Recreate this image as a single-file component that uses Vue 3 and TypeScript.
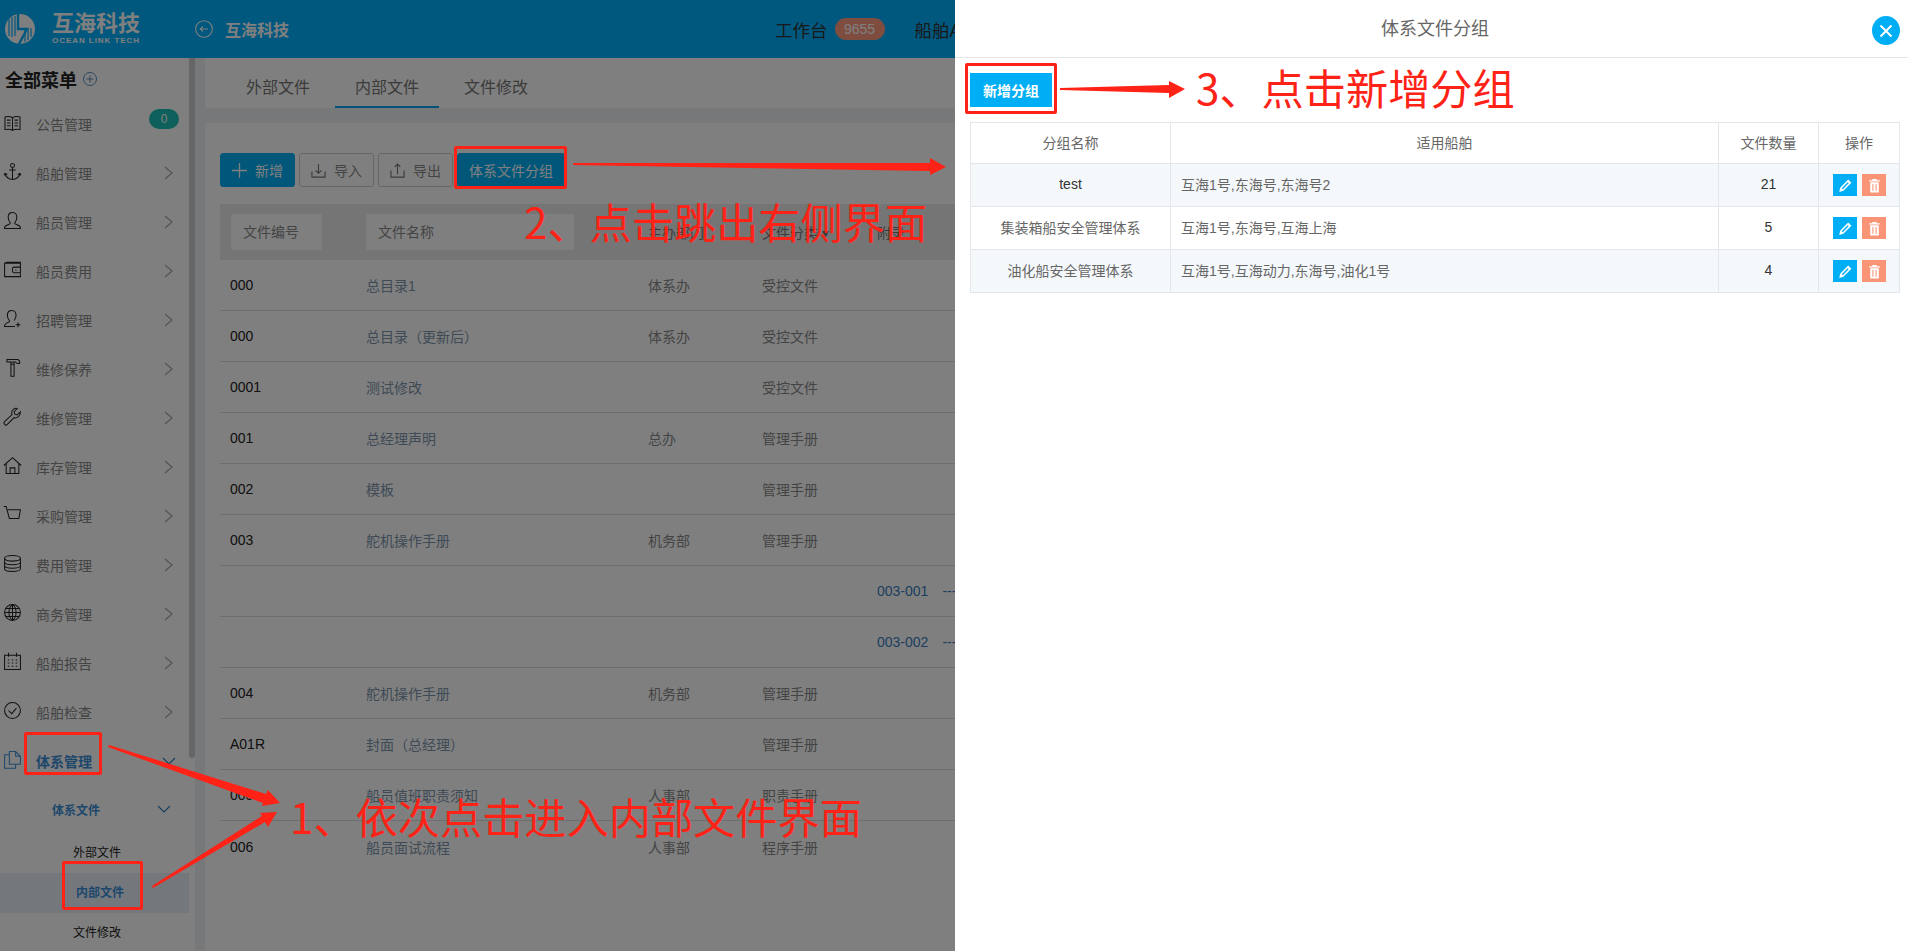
<script setup lang="ts">
interface MenuItem {
  label: string;
  icon: string;
  active?: boolean;
}

interface DocRow {
  code?: string;
  name?: string;
  dept?: string;
  kind?: string;
  link?: string;
}

const menu: MenuItem[] = [
  { label: '公告管理', icon: 'M12 6C9 4 6 4 2.500 5v16c3.500-1 6.500-1 9.500 1 3-2 6-2 9.500-1V5C18 4 15 4 12 6zM12 6v16M5 9h4.500M5 12.500h4.500M5 16h4.500M14.500 9H19M14.500 12.500H19M14.500 16H19' },
  { label: '船舶管理', icon: 'M12 7a2.500 2.500 0 1 0 0-5 2.500 2.500 0 0 0 0 5zM12 7v15M8 10h8M2.500 14c.5 5 5 8 9.500 8s9-3 9.500-8M2.500 14l-1 3M2.500 14l3 2M21.500 14l1 3M21.500 14l-3 2' },
  { label: '船员管理', icon: 'M12 2c-3.500 0-5.500 2.500-5.500 6 0 3 1.200 5 2.500 6.500v1.500c-2 1.500-7 2-7 5v1h20v-1c0-3-5-3.500-7-5v-1.500c1.300-1.500 2.500-3.500 2.500-6.500 0-3.500-2-6-5.500-6z' },
  { label: '船员费用', icon: 'M22 9V4H2v17h20v-4M2 4l3-1h17v1M14 9h8v7h-8c-1 0-2-1-2-2v-3c0-1 1-2 2-2zM15.500 12.500h1.500' },
  { label: '招聘管理', icon: 'M11 2c-3.500 0-5.500 2.500-5.500 6 0 3 1.200 5 2.500 6.500v1.500c-2 1.500-6 2-6 5v1h13M14 14.500c1.300-1.500 2.500-3.500 2.500-6.500 0-3.500-2-6-5.500-6M19 17v6M16 20h6' },
  { label: '维修保养', icon: 'M5 2h14l2 2v3h-3l-2-2H5zM10 5v3h4V5M10 8h4v15h-4z' },
  { label: '维修管理', icon: 'M22 6l-4 4-3-1-1-3 4-4c-3-1-7 1-7 5 0 1 0 2 .5 2.500L2 18.500c-1 1-1 2.500 0 3.500s2.500 1 3.500 0L14 13.500c3 1 8-1 8-7.500z' },
  { label: '库存管理', icon: 'M1 12L12 2l11 10M4 9v13h16V9M9 22v-7h6v7' },
  { label: '采购管理', icon: 'M1 2h3l4 15h12l2-11H6M9 21.500h.1M18 21.500h.1' },
  { label: '费用管理', icon: 'M2 5.500C2 3 7 2 12 2s10 1 10 3.500S17 9 12 9 2 8 2 5.500zM2 5.500v13C2 21 7 22 12 22s10-1 10-3.500v-13M2 10c0 2.500 5 3.500 10 3.500S22 12.500 22 10M2 14.500c0 2.500 5 3.500 10 3.500s10-1 10-3.500' },
  { label: '商务管理', icon: 'M12 2a10 10 0 1 0 0 20 10 10 0 0 0 0-20zM12 2c-3 2-4.500 6-4.500 10s1.500 8 4.500 10c3-2 4.500-6 4.500-10S15 4 12 2zM12 2v20M2 12h20M3.500 7h17M3.500 17h17' },
  { label: '船舶报告', icon: 'M2 4h20v18H2zM7 1v5M17 1v5M6 10h2M11 10h2M16 10h2M6 14h2M11 14h2M16 14h2M6 18h2M11 18h2M16 18h2' },
  { label: '船舶检查', icon: 'M12 2a10 10 0 1 0 0 20 10 10 0 0 0 0-20zM7 12l4 4 6-7' },
  { label: '体系管理', icon: 'M8 6H2v17h14v-5M8 2h8l6 6v10H8zM16 2v6h6', active: true },
];

const rows: DocRow[] = [
  { code: '000', name: '总目录1', dept: '体系办', kind: '受控文件' },
  { code: '000', name: '总目录（更新后）', dept: '体系办', kind: '受控文件' },
  { code: '0001', name: '测试修改', kind: '受控文件' },
  { code: '001', name: '总经理声明', dept: '总办', kind: '管理手册' },
  { code: '002', name: '模板', kind: '管理手册' },
  { code: '003', name: '舵机操作手册', dept: '机务部', kind: '管理手册' },
  { link: '003-001' },
  { link: '003-002' },
  { code: '004', name: '舵机操作手册', dept: '机务部', kind: '管理手册' },
  { code: 'A01R', name: '封面（总经理）', kind: '管理手册' },
  { code: '005', name: '船员值班职责须知', dept: '人事部', kind: '职责手册' },
  { code: '006', name: '船员面试流程', dept: '人事部', kind: '程序手册' },
];

const groups = [
  { name: 'test', ships: '互海1号,东海号,东海号2', count: 21 },
  { name: '集装箱船安全管理体系', ships: '互海1号,东海号,互海上海', count: 5 },
  { name: '油化船安全管理体系', ships: '互海1号,互海动力,东海号,油化1号', count: 4 },
];
</script>

<template>
  <div class="page">
    <header class="topbar">
      <div class="brand">
        <svg class="logo" viewBox="0 0 30 30">
          <circle cx="15" cy="15" r="15" fill="#fff" />
          <g stroke="#00b0ff" fill="none">
            <path d="M4 5v17M7 3v20M10 2v20" stroke-width="1.200" />
            <path d="M20 14v14M23 14v12M26 14v9" stroke-width="1.200" />
            <path d="M13 0v15h9L14 30" stroke-width="2.400" />
          </g>
        </svg>
        <div class="brand-text">
          <div class="brand-cn">互海科技</div>
          <div class="brand-en">OCEAN LINK TECH</div>
        </div>
      </div>
      <svg class="back" viewBox="0 0 18 18" fill="none" stroke="#fff" stroke-width="1.100">
        <circle cx="9" cy="9" r="8.300" />
        <path d="M13 9H5.500M8 6.300L5.300 9 8 11.700" />
      </svg>
      <span class="company">互海科技</span>
      <nav class="topnav">
        <span class="nav-item">工作台</span>
        <span class="nav-badge">9655</span>
        <span class="nav-item nav-next">船舶AIS</span>
      </nav>
    </header>

    <div class="main">
      <aside class="sidebar">
        <div class="menu-title">
          全部菜单
          <svg class="menu-plus" viewBox="0 0 14 14" fill="none" stroke="#5a8fc0" stroke-width="1">
            <circle cx="7" cy="7" r="6.500" />
            <path d="M7 3.500v7M3.500 7h7" />
          </svg>
        </div>
        <div v-for="(item, i) in menu" :key="item.label" class="menu-item" :class="{ active: item.active }">
          <svg class="menu-icon" viewBox="0 0 24 24" fill="none" stroke="currentColor" stroke-width="1.300">
            <path :d="item.icon" />
          </svg>
          <span class="menu-label">{{ item.label }}</span>
          <span v-if="i === 0" class="notice-badge">0</span>
          <svg v-else-if="item.active" class="chev" viewBox="0 0 14 14" fill="none" stroke="#2a7ac0" stroke-width="1.100">
            <path d="M1 4l6 6 6-6" />
          </svg>
          <svg v-else class="chev" viewBox="0 0 14 14" fill="none" stroke="#aaa" stroke-width="1.300">
            <path d="M3 1l7 6-7 6" />
          </svg>
        </div>
        <div class="sub-head">
          <span>体系文件</span>
          <svg class="chev sub-chev" viewBox="0 0 14 14" fill="none" stroke="#2a7ac0" stroke-width="1.100">
            <path d="M1 4l6 6 6-6" />
          </svg>
        </div>
        <div class="sub-item">外部文件</div>
        <div class="sub-item current">内部文件</div>
        <div class="sub-item">文件修改</div>
      </aside>
      <div class="scroll-track"><div class="scroll-thumb"></div></div>

      <section class="content">
        <div class="tabs">
          <span class="tab">外部文件</span>
          <span class="tab on">内部文件</span>
          <span class="tab">文件修改</span>
        </div>
        <div class="card">
          <div class="toolbar">
            <button class="btn primary">
              <svg class="btn-icon" viewBox="0 0 14 14" fill="none" stroke="#fff" stroke-width="1.200">
                <path d="M7 0v14M0 7h14" />
              </svg>
              新增
            </button>
            <button class="btn">
              <svg class="btn-icon" viewBox="0 0 16 16" fill="none" stroke="#777" stroke-width="1.200">
                <path d="M1 9v6h14V9M8 1v10M5 8l3 3 3-3" />
              </svg>
              导入
            </button>
            <button class="btn">
              <svg class="btn-icon" viewBox="0 0 16 16" fill="none" stroke="#777" stroke-width="1.200">
                <path d="M1 8v7h14V8M8 12V1M5 4l3-3 3 3" />
              </svg>
              导出
            </button>
            <button class="btn primary wide">体系文件分组</button>
          </div>

          <div class="doc-head">
            <div class="doc-cell"><span class="fake-input code-input">文件编号</span></div>
            <div class="doc-cell"><span class="fake-input name-input">文件名称</span></div>
            <div class="doc-cell">主办部门</div>
            <div class="doc-cell">文件分类 ▾</div>
            <div class="doc-cell">附录</div>
          </div>
          <div v-for="(row, i) in rows" :key="i" class="doc-row">
            <div class="doc-cell code">{{ row.code }}</div>
            <div class="doc-cell name">{{ row.name }}</div>
            <div class="doc-cell">{{ row.dept }}</div>
            <div class="doc-cell">{{ row.kind }}</div>
            <div class="doc-cell link" v-if="row.link">{{ row.link }}<span class="dash">---</span></div>
          </div>
        </div>
      </section>
    </div>

    <div class="mask"></div>

    <aside class="panel">
      <div class="panel-head">
        <span class="panel-title">体系文件分组</span>
        <span class="panel-close">
          <svg viewBox="0 0 14 14" fill="none" stroke="#fff" stroke-width="2">
            <path d="M1.500 1.500l11 11M12.500 1.500l-11 11" />
          </svg>
        </span>
      </div>
      <button class="add-group">新增分组</button>
      <table class="group-table">
        <colgroup>
          <col class="c1" />
          <col class="c2" />
          <col class="c3" />
          <col class="c4" />
        </colgroup>
        <thead>
          <tr>
            <th>分组名称</th>
            <th>适用船舶</th>
            <th>文件数量</th>
            <th>操作</th>
          </tr>
        </thead>
        <tbody>
          <tr v-for="g in groups" :key="g.name">
            <td class="mid">{{ g.name }}</td>
            <td>{{ g.ships }}</td>
            <td class="mid count">{{ g.count }}</td>
            <td class="ops">
              <span class="op edit">
                <svg viewBox="0 0 14 14" fill="#fff">
                  <path d="M9.500 1.500l3 3-7.500 7.500-3.800 1 .8-3.800zM3.500 9.500l1 1 5.500-5.500-1-1z" fill-rule="evenodd" />
                </svg>
              </span>
              <span class="op del">
                <svg viewBox="0 0 14 14" fill="#fff">
                  <path d="M5 1h4v1h3v1.200H2V2h3zM3 4h8v9.500H3zM5 5.500v6.500h1V5.500zM8 5.500v6.500h1V5.500z" fill-rule="evenodd" />
                </svg>
              </span>
            </td>
          </tr>
        </tbody>
      </table>
    </aside>

    <!-- 标注层 -->
    <div class="notes">
      <span class="box box-a"></span>
      <span class="box box-b"></span>
      <span class="box box-c"></span>
      <span class="box box-d"></span>
      <svg class="arrows" viewBox="0 0 1908 951" fill="#ff2216">
        <polygon points="109,745 266,794 268,790 280,803 262,806 263,803 108,747" />
        <polygon points="152,886 262,816 260,813 277,812 268,827 265,822 153,888" />
        <polygon points="573,163 930,163 930,158 946,167 930,175 930,171 573,165" />
        <polygon points="1060,88 1169,85 1169,81 1185,89 1169,98 1169,93 1060,90" />
      </svg>
      <span class="note note-1">1、依次点击进入内部文件界面</span>
      <span class="note note-2">2、点击跳出右侧界面</span>
      <span class="note note-3">3、点击新增分组</span>
    </div>
  </div>
</template>

<style>
html,
body {
  margin: 0;
  overflow: hidden;
}
</style>

<style scoped>
.page {
  position: relative;
  width: 1908px;
  height: 951px;
  overflow: hidden;
  background: #fff;
  font-family: "Liberation Sans", "Noto Sans CJK SC", sans-serif;
  font-size: 14px;
  color: #333;
}

.topbar {
  display: flex;
  align-items: center;
  height: 58px;
  background: #00b0ff;
  color: #fff;
}

.brand {
  display: flex;
  align-items: center;
  width: 195px;
  padding-left: 5px;
  box-sizing: border-box;
}

.logo {
  width: 30px;
  height: 30px;
  margin-top: -1px;
}

.brand-text {
  margin-left: 17px;
}

.brand-cn {
  font-size: 22px;
  font-weight: 700;
  line-height: 24px;
}

.brand-en {
  font-size: 8px;
  font-weight: 700;
  line-height: 10px;
  letter-spacing: 0.950px;
  white-space: nowrap;
}

.back {
  width: 18px;
  height: 18px;
}

.company {
  margin-left: 12px;
  font-size: 16px;
  font-weight: 700;
}

.topnav {
  display: flex;
  align-items: center;
  margin-left: 486px;
}

.nav-item {
  font-size: 17.500px;
  color: #333;
  white-space: nowrap;
}

.nav-badge {
  margin-left: 7px;
  width: 50px;
  height: 22px;
  line-height: 22px;
  border-radius: 11px;
  background: #ff9a80;
  color: #fff;
  text-align: center;
  font-size: 14px;
}

.nav-next {
  margin-left: 30px;
}

.main {
  display: flex;
  height: 893px;
}

.sidebar {
  width: 189px;
  flex: none;
  background: #fff;
  overflow: hidden;
}

.menu-title {
  display: flex;
  align-items: center;
  height: 42px;
  padding-left: 5px;
  font-size: 18px;
  font-weight: 700;
  color: #222;
}

.menu-plus {
  width: 14px;
  height: 14px;
  margin-left: 6px;
}

.menu-item {
  display: flex;
  align-items: center;
  position: relative;
  height: 49px;
  color: #222;
}

.menu-icon {
  width: 19px;
  height: 19px;
  margin-left: 3px;
  margin-top: -5px;
  flex: none;
}

.menu-label {
  margin-left: 14px;
  margin-top: -2px;
  color: #888;
}

.menu-item.active .menu-icon {
  color: #3c8fd8;
}

.menu-item.active .menu-label {
  color: #3c8fd8;
  font-weight: 700;
}

.notice-badge {
  position: absolute;
  left: 149px;
  top: 9px;
  width: 30px;
  height: 20px;
  line-height: 20px;
  border-radius: 10px;
  background: #1cc0b8;
  color: #fff;
  font-size: 12px;
  text-align: center;
}

.chev {
  position: absolute;
  left: 162px;
  top: 17px;
  width: 14px;
  height: 14px;
}

.sub-head {
  position: relative;
  display: flex;
  align-items: center;
  height: 47px;
  padding-left: 52px;
  font-size: 12px;
  font-weight: 700;
  color: #3c8fd8;
}

.sub-chev {
  left: 157px;
  top: 16px;
}

.sub-item {
  height: 40px;
  line-height: 40px;
  padding-left: 73px;
  font-size: 12px;
  color: #222;
}

.sub-item.current {
  padding-left: 76px;
  background: #e8eef8;
  font-weight: 700;
  color: #3c8fd8;
}

.scroll-track {
  width: 6px;
  flex: none;
  background: #fff;
}

.scroll-thumb {
  height: 700px;
  background: #ccc;
  border-radius: 0 0 3px 3px;
}

.content {
  flex: 1;
  min-width: 0;
  padding-left: 10px;
  background: #eef0f2;
}

.tabs {
  display: flex;
  height: 50px;
  padding-left: 21px;
  gap: 5px;
  background: #fff;
  box-sizing: border-box;
}

.tab {
  width: 104px;
  height: 50px;
  box-sizing: border-box;
  padding-top: 19px;
  text-align: center;
  font-size: 16px;
  line-height: 22px;
  color: #777;
  border-bottom: 2px solid transparent;
}

.tab.on {
  border-bottom-color: #00a5f0;
}

.card {
  margin-top: 15px;
  height: 828px;
  padding: 30px 0 0 15px;
  background: #fff;
  box-sizing: border-box;
}

.toolbar {
  display: flex;
  gap: 4px;
}

.btn {
  display: flex;
  align-items: center;
  justify-content: center;
  gap: 8px;
  width: 75px;
  height: 34px;
  padding: 0;
  border: 1px solid #ccc;
  border-radius: 3px;
  background: #fff;
  color: #888;
  font: inherit;
}

.btn.primary {
  background: #00aef5;
  border-color: #00aef5;
  color: #fff;
}

.btn.wide {
  width: 108px;
}

.btn-icon {
  width: 15px;
  height: 15px;
}

.doc-head,
.doc-row {
  display: grid;
  grid-template-columns: 135px 282px 114px 115px 1fr;
  align-items: center;
}

.doc-head {
  margin-top: 17px;
  height: 56px;
  background: #ebebeb;
  color: #777;
}

.doc-row {
  height: 51px;
  border-bottom: 1px solid #ddd;
  box-sizing: border-box;
  color: #888;
}

.doc-row:last-child {
  border-bottom: none;
}

.doc-cell {
  padding-left: 11px;
  white-space: nowrap;
}

.doc-cell.code {
  padding-left: 10px;
  color: #222;
}

.doc-cell.name {
  color: #7d94ac;
}

.doc-cell.link {
  grid-column: 5;
  color: #3a80c0;
}

.dash {
  margin-left: 14px;
}

.fake-input {
  display: block;
  height: 36px;
  line-height: 36px;
  padding-left: 12px;
  box-sizing: border-box;
  background: #fff;
  border-radius: 3px;
  color: #888;
}

.code-input {
  width: 91px;
}

.name-input {
  width: 208px;
}

.mask {
  position: absolute;
  inset: 0;
  z-index: 10;
  background: rgba(0, 0, 0, 0.5);
}

.panel {
  position: absolute;
  top: 0;
  right: 0;
  bottom: 0;
  z-index: 20;
  width: 953px;
  background: #fff;
}

.panel-head {
  position: relative;
  height: 58px;
  border-bottom: 1px solid #e5e5e5;
  box-sizing: border-box;
  display: flex;
  align-items: center;
  justify-content: center;
  padding-left: 7px;
}

.panel-title {
  font-size: 18px;
  margin-top: -3px;
  color: #666;
}

.panel-close {
  position: absolute;
  right: 8px;
  top: 16px;
  width: 28px;
  height: 29px;
  border-radius: 50%;
  background: #00aef5;
  display: flex;
  align-items: center;
  justify-content: center;
}

.panel-close svg {
  width: 14px;
  height: 14px;
}

.add-group {
  display: block;
  margin: 15px 0 0 15px;
  width: 82px;
  height: 34px;
  padding: 0;
  border: none;
  background: #00aef5;
  color: #fff;
  font: inherit;
  font-weight: 700;
  font-size: 14px;
}

.group-table {
  margin: 15px 0 0 15px;
  width: 930px;
  border-collapse: collapse;
  table-layout: fixed;
}

.c1 {
  width: 200px;
}

.c3 {
  width: 100px;
}

.c4 {
  width: 81px;
}

.group-table th,
.group-table td {
  border: 1px solid #e3e6ea;
  font-weight: 400;
  color: #666;
  height: 43px;
  padding: 0 0 2px 10px;
  box-sizing: border-box;
}

.group-table th {
  padding: 0 0 2px;
  height: 41px;
  text-align: center;
}

.group-table td.mid {
  padding: 0 0 2px;
  text-align: center;
}

.group-table td.count {
  color: #333;
}

.group-table tbody tr:nth-child(odd) td {
  background: #f5f8fb;
}

.group-table tbody tr:first-child td.mid:first-child {
  color: #333;
}

.group-table td.ops {
  padding: 0 0 0 14px;
}

.op {
  display: inline-flex;
  align-items: center;
  justify-content: center;
  width: 24px;
  height: 22px;
  margin-right: 5px;
  vertical-align: middle;
}

.op svg {
  width: 15px;
  height: 15px;
}

.edit {
  background: #00aef5;
}

.del {
  background: #fa9476;
}

.notes {
  position: absolute;
  inset: 0;
  z-index: 30;
  pointer-events: none;
}

.arrows {
  position: absolute;
  left: 0;
  top: 0;
  width: 1908px;
  height: 951px;
}

.box {
  position: absolute;
  box-sizing: border-box;
  border: 3px solid #ff2216;
  border-radius: 2px;
}

.box-a {
  left: 24px;
  top: 732px;
  width: 78px;
  height: 43px;
}

.box-b {
  left: 62px;
  top: 861px;
  width: 81px;
  height: 49px;
}

.box-c {
  left: 454px;
  top: 146px;
  width: 113px;
  height: 43px;
}

.box-d {
  left: 965px;
  top: 63px;
  width: 92px;
  height: 51px;
}

.note {
  position: absolute;
  font-family: "Noto Sans CJK SC", sans-serif;
  font-size: 42.200px;
  font-weight: 400;
  line-height: 50px;
  color: #ff2216;
  white-space: nowrap;
}

.note-1 {
  left: 290px;
  top: 791px;
}

.note-2 {
  left: 524px;
  top: 196px;
}

.note-3 {
  left: 1196px;
  top: 62px;
}
</style>
